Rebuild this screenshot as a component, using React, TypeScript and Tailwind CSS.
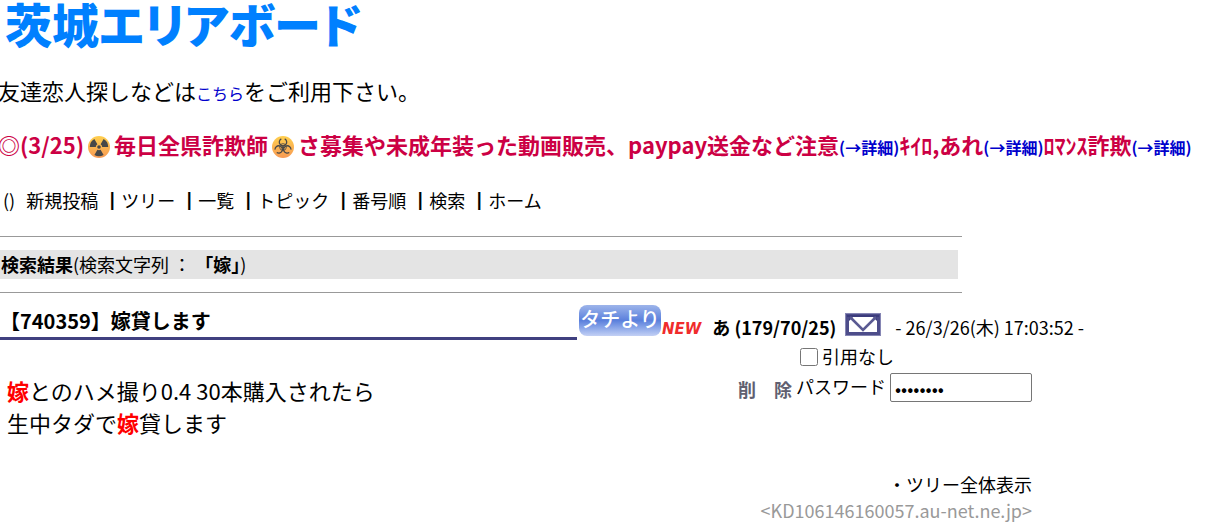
import { type ReactNode } from "react";

const navItems = ["新規投稿", "ツリー", "一覧", "トピック", "番号順", "検索", "ホーム"];

const Detail = () => (
  <a href="#" className="text-[16px] text-[#0000cc]">
    (→詳細)
  </a>
);

const Hit = ({ children }: { children: ReactNode }) => (
  <b className="text-[#ff0000]">{children}</b>
);

const Coin = ({ id, label, children }: { id: string; label: string; children: ReactNode }) => (
  <svg
    width="22"
    height="22"
    viewBox="-11 -11 22 22"
    role="img"
    aria-label={label}
    className="mx-1 inline-block align-[-4px]"
  >
    <defs>
      <linearGradient id={id} x1="0" y1="0" x2="0" y2="1">
        <stop offset="0" stopColor="#ffcf4d" />
        <stop offset="1" stopColor="#f79a55" />
      </linearGradient>
    </defs>
    <circle r="11" fill={`url(#${id})`} />
    {children}
  </svg>
);

const Radioactive = () => (
  <Coin id="radioactive" label="放射能">
    <circle r="1.8" fill="#484848" />
    {[0, 120, 240].map((angle) => (
      <path
        key={angle}
        d="M-1.6 2.8L-4.6 8A9.2 9.2 0 0 0 4.6 8L1.6 2.8A3.2 3.2 0 0 1 -1.6 2.8Z"
        transform={`rotate(${angle})`}
        fill="#484848"
      />
    ))}
  </Coin>
);

const Biohazard = () => (
  <Coin id="biohazard" label="バイオハザード">
    <circle r="3.4" fill="none" stroke="#484848" strokeWidth="0.8" />
    {[0, 120, 240].map((angle) => (
      <g key={angle} transform={`rotate(${angle})`} fill="none" stroke="#484848">
        <path d="M-1.7 -8.2A3.7 3.7 0 1 0 1.7 -8.2" strokeWidth="1.3" />
        <path d="M0 0V-1.4" strokeWidth="1.2" />
      </g>
    ))}
  </Coin>
);

const MailIcon = () => (
  <svg width="36" height="23" viewBox="0 0 36 23" aria-hidden="true">
    <rect x="0.5" y="0.5" width="35" height="22" fill="#4d4d8a" stroke="#8686b4" />
    <path d="M4 4H32V19H4Z" fill="#fff" />
    <path d="M3 3H9L4 8V3M33 3H27L32 8V3" fill="#3b3b7c" />
    <path d="M2 3H34" stroke="#3b3b7c" strokeWidth="2" />
    <path d="M5 4L18 17L31 4" fill="none" stroke="#5a5a92" strokeWidth="2.6" />
  </svg>
);

const Header = () => (
  <header>
    <h1 className="h-[50px] pl-[5px] text-[47px] leading-[46px] font-black text-[#0080ff] [font-feature-settings:'palt']">
      茨城エリアボード
    </h1>
    <p className="mt-6 -ml-0.5 text-[22px] leading-8">
      友達恋人探しなどは
      <a href="#" className="text-[16px] text-[#0000cc]">
        こちら
      </a>
      をご利用下さい。
    </p>
    <p className="mt-[19px] -ml-0.5 text-[22px] leading-8 font-bold whitespace-nowrap text-[#cc0044]">
      ◎(3/25)
      <Radioactive />
      毎日全県詐欺師
      <Biohazard />
      さ募集や未成年装った動画販売、paypay送金など注意
      <Detail />
      ｷｲﾛ,あれ
      <Detail />
      ﾛﾏﾝｽ詐欺
      <Detail />
    </p>
  </header>
);

const Nav = () => (
  <nav className="mt-[23px] flex items-center text-[18px] leading-7 whitespace-nowrap">
    <span className="mr-[11px] ml-[3px]">()</span>
    {navItems.map((item, i) => (
      <span key={item} className="flex items-center">
        {i > 0 && <b className="ml-[5px]">┃</b>}
        <a href="#">{item}</a>
      </span>
    ))}
  </nav>
);

const SearchResult = () => (
  <section className="mt-[22px] max-w-[962px]">
    <hr className="border-[#999]" />
    <p className="mt-[13px] mr-1 bg-[#e4e4e4] pl-px text-[18px] leading-[29px]">
      <b>検索結果</b>(検索文字列 ： <b>「嫁」</b>)
    </p>
    <hr className="mt-[13px] border-[#999]" />
  </section>
);

const Post = () => (
  <article className="flex items-start">
    <div className="w-[577px] shrink-0">
      <h2 className="mt-[12px] border-b-3 border-[#404080] text-[20px] leading-8 font-bold">
        【740359】嫁貸します
      </h2>
      <p className="mt-[34px] pl-[7px] text-[22px] leading-8">
        <Hit>嫁</Hit>とのハメ撮り0.4 30本購入されたら
        <br />
        生中タダで<Hit>嫁</Hit>貸します
      </p>
    </div>
    <div className="ml-0.5 pt-3 text-[18px] whitespace-nowrap">
      <div className="flex h-9 items-end leading-7">
        <span className="mb-[5px] h-[31px] w-[82px] rounded-lg bg-linear-to-b from-[#9db4ea] via-[#5b80dc] to-[#c3d0f4] text-center text-[20px] leading-[28px] font-medium text-white">
          タチより
        </span>
        <span className="mb-[-2px] ml-px font-['DejaVu_Sans'] text-[15px] font-bold text-[#f02c2c] italic">
          NEW
        </span>
        <b className="ml-[11px]">あ (179/70/25)</b>
        <a href="#" aria-label="メール" className="mb-[5px] ml-[9px]">
          <MailIcon />
        </a>
        <span className="ml-[14px]">- 26/3/26(木) 17:03:52 -</span>
      </div>
      <form className="mt-px w-[453px]">
        <label className="ml-[221px] flex items-center gap-1 leading-[29px]">
          <input type="checkbox" className="size-[18px]" />
          引用なし
        </label>
        <div className="mt-px flex items-center justify-end">
          <button type="button" className="mt-1 mr-1 font-bold text-[#606070]">
            削　除
          </button>
          <label htmlFor="password" className="mr-1 mb-0.5">
            パスワード
          </label>
          <input
            id="password"
            type="password"
            defaultValue="password"
            className="h-[29px] w-[142px] rounded-xs border border-[#767676] px-1 text-[18px]"
          />
        </div>
      </form>
      <div className="mt-[68px] w-[453px] text-right leading-[26px]">
        <a href="#" className="block">
          ・ツリー全体表示
        </a>
        <span className="text-[#999]">&lt;KD106146160057.au-net.ne.jp&gt;</span>
      </div>
    </div>
  </article>
);

const App = () => (
  <div className="bg-white font-['Noto_Sans_CJK_JP',sans-serif] text-black">
    <Header />
    <Nav />
    <SearchResult />
    <Post />
  </div>
);

export default App;
